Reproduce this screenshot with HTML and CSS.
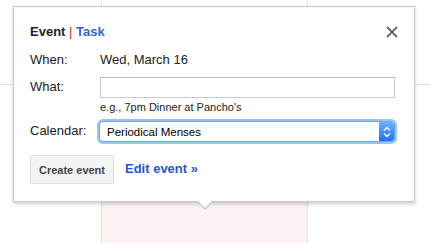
FILE: index.html
```html
<!DOCTYPE html>
<html>
<head>
<meta charset="utf-8">
<link rel="stylesheet" href="styles.css">
</head>
<body>
<div class="stage">
  <div class="calendar">
    <div class="cell c1 r1"></div>
    <div class="cell c2 r1"></div>
    <div class="cell c3 r1"></div>
    <div class="cell c1 r2"></div>
    <div class="cell c2 r2 pink"></div>
    <div class="cell c3 r2"></div>
  </div>

  <div class="bubble">
    <div class="head">
      <div class="tabs"><span class="tab-on">Event</span> <span class="sep">|</span> <a class="tab-off">Task</a></div>
      <svg class="close" width="12" height="12" viewBox="0 0 12 12"><path d="M1 1L11 11M11 1L1 11" stroke="#666" stroke-width="1.8" fill="none"/></svg>
    </div>
    <div class="form">
      <div class="label when-l">When:</div>
      <div class="value when-v">Wed, March 16</div>
      <div class="label what-l">What:</div>
      <div class="value what-v">
        <div class="input"></div>
        <div class="hint">e.g., 7pm Dinner at Pancho's</div>
      </div>
      <div class="label cal-l">Calendar:</div>
      <div class="value cal-v">
        <div class="select">
          <span class="sel-text">Periodical Menses</span>
          <span class="sel-btn"><svg width="8" height="12" viewBox="0 0 8 12"><path d="M1 4.5L4 1.5L7 4.5M1 7.5L4 10.5L7 7.5" stroke="#fff" stroke-width="1.4" fill="none"/></svg></span>
        </div>
      </div>
    </div>
    <div class="actions">
      <button class="create">Create event</button>
      <a class="edit">Edit event &raquo;</a>
    </div>
    <div class="arrow"></div>
  </div>
</div>
</body>
</html>
```
FILE: styles.css
```css
html, body {
  margin: 0;
  padding: 0;
  background: #fff;
  font-family: "Liberation Sans", Arial, sans-serif;
  font-size: 13px;
  color: #222;
}
.stage {
  position: relative;
  width: 430px;
  height: 243px;
  overflow: hidden;
}
.calendar {
  display: grid;
  grid-template-columns: 102px 206px 1fr;
  grid-template-rows: 85px 158px;
  height: 243px;
}
.cell {
  box-sizing: border-box;
}
.c1, .c2 { border-right: 1px solid #e2e2e2; }
.r1 { border-bottom: 1px solid #e2e2e2; }
.pink { background: #fdf3f3; border-right-color: #eadcdc; }
.bubble {
  position: absolute;
  left: 13px;
  top: 6px;
  width: 384px;
  height: 194px;
  background: #fff;
  border: 1px solid #c8c8c8;
  box-shadow: 0 2px 4px rgba(0, 0, 0, 0.2);
  padding: 0 0 0 16px;
  box-sizing: content-box;
}
.head {
  display: flex;
  justify-content: space-between;
  align-items: center;
  padding: 14px 16px 0 0;
  height: 20px;
}
.tabs {
  font-weight: bold;
  font-size: 13px;
  color: #222;
}
.sep { color: #a33a1a; font-weight: normal; }
.tab-off { color: #3266cc; }
.close { margin-top: 2px; }
.form {
  display: grid;
  grid-template-columns: 70px 295px;
  row-gap: 0;
  margin-top: 0;
}
.label, .value { line-height: 16px; }
.when-l, .when-v { padding-top: 11px; }
.what-l { padding-top: 11px; }
.what-v { padding-top: 9px; }
.input {
  box-sizing: border-box;
  height: 21px;
  border: 1px solid #c8c8c8;
  border-top-color: #bdbdbd;
  background: #fff;
}
.hint {
  font-size: 11px;
  line-height: 13px;
  margin-top: 3px;
}
.cal-l { padding-top: 9px; }
.cal-v { padding-top: 7px; }
.select {
  box-sizing: border-box;
  height: 21px;
  width: 296px;
  margin-left: -1px;
  display: flex;
  align-items: center;
  justify-content: space-between;
  border: 1px solid #6ea6ee;
  border-radius: 4px;
  box-shadow: 0 0 0 2px #9ac4f7;
  background: #fff;
  overflow: hidden;
}
.sel-text {
  font-size: 11.5px;
  padding-left: 7px;
  color: #000;
}
.sel-btn {
  width: 15px;
  height: 19px;
  display: flex;
  align-items: center;
  justify-content: center;
  background: linear-gradient(#6aaefc, #1f74f4);
}
.actions {
  display: flex;
  align-items: center;
  gap: 11px;
  margin-top: 13px;
}
.create {
  box-sizing: border-box;
  height: 29px;
  width: 84px;
  padding: 0;
  font-family: "Liberation Sans", Arial, sans-serif;
  font-size: 11px;
  font-weight: bold;
  color: #444;
  background: linear-gradient(#f5f5f5, #f1f1f1);
  border: 1px solid #dcdcdc;
  border-radius: 2px;
}
.edit {
  font-weight: bold;
  font-size: 13px;
  color: #2457cc;
  margin-top: -2px;
}
.arrow {
  position: absolute;
  left: 182px;
  bottom: -9px;
  width: 0;
  height: 0;
  border-left: 9px solid transparent;
  border-right: 9px solid transparent;
  border-top: 9px solid #c8c8c8;
}
.arrow::after {
  content: "";
  position: absolute;
  left: -8px;
  top: -10px;
  border-left: 8px solid transparent;
  border-right: 8px solid transparent;
  border-top: 8px solid #fff;
}
```
